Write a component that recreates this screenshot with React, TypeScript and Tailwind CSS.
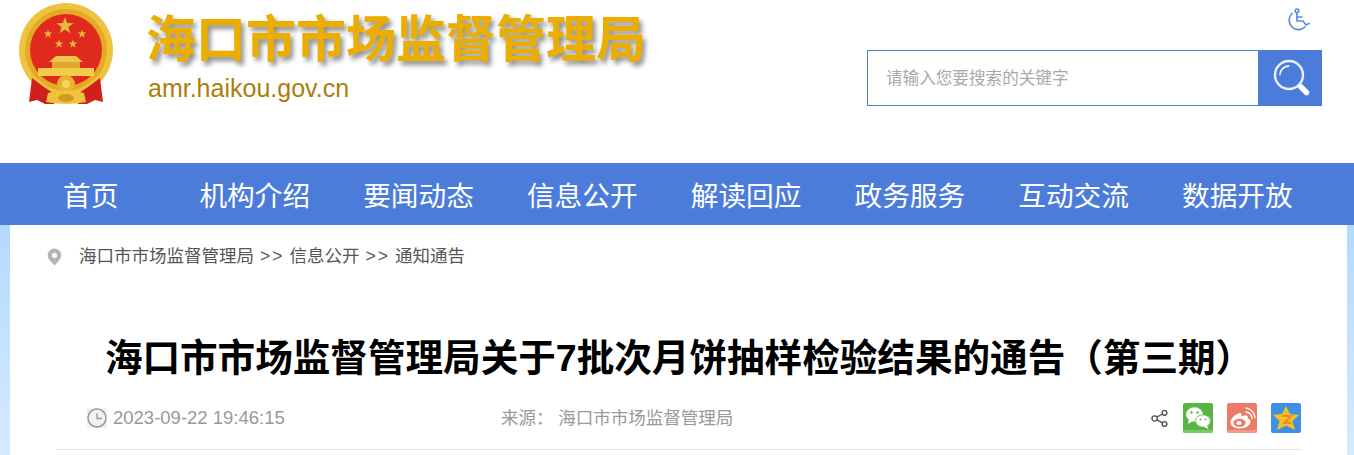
import React from 'react';

const cjk = "font-['Liberation_Sans','Noto_Sans_CJK_SC',sans-serif]";

const navItems = ['机构介绍', '要闻动态', '信息公开', '解读回应', '政务服务', '互动交流', '数据开放'];

const Star: React.FC<{ x: number; y: number; r: number }> = ({ x, y, r }) => {
  const pts: string[] = [];
  for (let i = 0; i < 10; i++) {
    const rad = i % 2 === 0 ? r : r * 0.4;
    const a = (Math.PI / 5) * i - Math.PI / 2;
    pts.push(`${x + rad * Math.cos(a)},${y + rad * Math.sin(a)}`);
  }
  return <polygon points={pts.join(' ')} fill="#e9b93a" />;
};

const Emblem: React.FC = () => (
  <svg width="96" height="102" viewBox="0 0 96 102" className="shrink-0">
    <circle cx="48" cy="47" r="47" fill="#efc23f" />
    <circle cx="48" cy="47" r="41" fill="#e3ab24" />
    <circle cx="48" cy="47" r="36" fill="#e02a1e" />
    <Star x={47} y={23} r={9} />
    <Star x={30} y={31} r={4.5} />
    <Star x={64} y={31} r={4.5} />
    <Star x={41} y={41} r={4.5} />
    <Star x={55} y={41} r={4.5} />
    <path d="M38 53 H58 L65 59 H31 Z" fill="#efc64c" />
    <rect x="34" y="59" width="28" height="6" fill="#e0a92c" />
    <rect x="20" y="65" width="56" height="8" fill="#f3cc4a" />
    <path d="M16 72 Q30 88 48 88 Q66 88 80 72 L84 76 Q68 94 48 94 Q28 94 12 76 Z" fill="#efc23f" />
    <path d="M14 75 L11 99 L19 97 L27 101 L36 101 L38 92 L26 84 Z" fill="#d0201c" />
    <path d="M82 75 L85 99 L77 97 L69 101 L60 101 L58 92 L70 84 Z" fill="#d0201c" />
    <circle cx="48" cy="81" r="9" fill="#e8b42e" />
    <circle cx="48" cy="81" r="4" fill="#f5d35c" />
    <path d="M30 90 Q48 84 66 90 L68 99 Q48 103 28 99 Z" fill="#efc23f" />
    <ellipse cx="48" cy="95" rx="8" ry="4" fill="#d59a1c" />
  </svg>
);

const WheelchairIcon: React.FC = () => (
  <svg width="24" height="24" viewBox="0 0 24 24" fill="none" stroke="#5f8ae0" strokeWidth="1.7" strokeLinecap="round" strokeLinejoin="round">
    <circle cx="11" cy="2.8" r="1.8" />
    <path d="M11 5.5 V13 H17 L20 17 L23 15.5" />
    <path d="M11 9 H16" />
    <path d="M6 5.5 A9.2 9.2 0 1 0 19 19" />
  </svg>
);

const SearchIcon: React.FC = () => (
  <svg width="38" height="38" viewBox="0 0 38 38" fill="none" className="ml-[3px]">
    <circle cx="16" cy="16" r="14" stroke="#e8f0fb" strokeWidth="2.4" />
    <path d="M7 15.5 A9 9 0 0 1 15.5 7" stroke="#e8f0fb" strokeWidth="1.8" strokeLinecap="round" />
    <path d="M28 28 L33.5 33.5" stroke="#ffffff" strokeWidth="5.5" strokeLinecap="round" />
  </svg>
);

const PinIcon: React.FC = () => (
  <svg width="15" height="18" viewBox="0 0 15 18">
    <path fillRule="evenodd" d="M7.5 0.5 A6.8 6.8 0 0 1 14.3 7.3 C14.3 11 10 15 7.5 17.5 C5 15 0.7 11 0.7 7.3 A6.8 6.8 0 0 1 7.5 0.5 Z M7.5 4.7 A2.6 2.6 0 1 0 7.5 9.9 A2.6 2.6 0 1 0 7.5 4.7 Z" fill="#b5b5b5" />
  </svg>
);

const ClockIcon: React.FC = () => (
  <svg width="20" height="20" viewBox="0 0 20 20" fill="none" className="bg-[#f1f1f1]">
    <circle cx="10" cy="10" r="9" stroke="#999999" strokeWidth="1.5" />
    <path d="M10 5 V10.5 H15" stroke="#999999" strokeWidth="1.3" />
  </svg>
);

const ShareIcon: React.FC = () => (
  <svg width="18" height="19" viewBox="0 0 18 19" fill="none" stroke="#555555" strokeWidth="1.4">
    <circle cx="13.5" cy="3.8" r="2.4" />
    <circle cx="13.5" cy="15" r="2.4" />
    <circle cx="3.6" cy="9.5" r="2.6" />
    <path d="M5.9 8.2 L11.4 5 M5.9 10.8 L11.4 13.8" />
  </svg>
);

const WechatIcon: React.FC = () => (
  <svg width="30" height="30" viewBox="0 0 30 30" className="rounded-[2px]">
    <rect width="30" height="30" fill="#56b63f" />
    <rect y="27" width="30" height="3" fill="#7cc86a" />
    <ellipse cx="11.5" cy="11.5" rx="8.5" ry="7.2" fill="#ffffff" />
    <path d="M6 16 L5 21 L10 18 Z" fill="#ffffff" />
    <ellipse cx="20" cy="18" rx="7.5" ry="6.2" fill="#ffffff" stroke="#56b63f" strokeWidth="0.8" />
    <path d="M24 22.5 L25.5 26 L21 24 Z" fill="#ffffff" />
    <circle cx="8.5" cy="9.5" r="1.2" fill="#56b63f" />
    <circle cx="14.5" cy="9.5" r="1.2" fill="#56b63f" />
    <circle cx="17.5" cy="16.5" r="1" fill="#56b63f" />
    <circle cx="22.5" cy="16.5" r="1" fill="#56b63f" />
  </svg>
);

const WeiboIcon: React.FC = () => (
  <svg width="30" height="30" viewBox="0 0 30 30" className="rounded-[2px]">
    <rect width="30" height="30" fill="#ec7a66" />
    <rect y="27" width="30" height="3" fill="#f19a8a" />
    <path d="M12.5 10 C7 12 3.5 16 3.5 19.5 C3.5 23 8 25.5 13 25.5 C19 25.5 23.5 22 23.5 18.5 C23.5 16.5 21.5 15.8 20.5 15.5 C21.2 13.5 20.5 12.2 18.5 12.2 C17 12.2 15 13 14.5 13.2 C14.8 11 14 9.5 12.5 10 Z" fill="#ffffff" />
    <ellipse cx="12.5" cy="19.8" rx="6.2" ry="4" fill="#ec7a66" />
    <ellipse cx="12" cy="20" rx="2.6" ry="2" fill="#ffffff" />
    <path d="M19 9 A7 7 0 0 1 25 15.5 M19 5 A11 11 0 0 1 28 14.5" fill="none" stroke="#ffffff" strokeWidth="1.3" strokeLinecap="round" />
  </svg>
);

const QzoneIcon: React.FC = () => (
  <svg width="30" height="30" viewBox="0 0 30 30" className="rounded-[2px]">
    <rect width="30" height="30" fill="#3f8fe4" />
    <polygon points="15,3 19,11 28,12 21.5,18 24,27 15,22.5 6,27 8.5,18 2,12 11,11" fill="#f6c01e" />
    <path d="M10.5 13 H20 L13.5 20 H20.5" fill="none" stroke="#e0912a" strokeWidth="2.2" />
  </svg>
);

const Sep: React.FC = () => <span className="ml-[6px] mr-[5px] tracking-[2px]">&gt;&gt;</span>;

const App: React.FC = () => {
  return (
    <div className={`h-[455px] overflow-hidden bg-white ${cjk}`}>
      <header className="h-[163px] flex justify-between pl-[18px] pr-[32px]">
        <div className="flex pt-[3px]">
          <Emblem />
          <div className="ml-[32px]">
            <h1 className="mt-[2px] text-[50px] leading-[70px] font-bold text-[#ebad00] [text-shadow:3px_4px_5px_rgba(0,0,0,0.45)]">
              海口市市场监督管理局
            </h1>
            <p className="ml-[2px] mt-[-2px] text-[25px] leading-[30px] text-[#ac7d0c]">amr.haikou.gov.cn</p>
          </div>
        </div>
        <div className="flex flex-col items-end pt-[8px]">
          <div className="mr-[12px] h-[24px]">
            <WheelchairIcon />
          </div>
          <div className="mt-[18px] flex h-[56px] w-[455px]">
            <div className="flex flex-1 items-center border border-[#4c7cd9] pl-[18px] pt-[2px] text-[16.6px] text-[#a9a9a9]">
              请输入您要搜索的关键字
            </div>
            <div className="flex w-[63px] items-center justify-center bg-[#4c7cd9]">
              <SearchIcon />
            </div>
          </div>
        </div>
      </header>

      <nav className="flex h-[62px] items-center bg-[#4c7cd9] pl-[63px] pt-[5px] text-[27.7px] text-white">
        <a className="mr-[81px]">首页</a>
        <div className="flex gap-[53px]">
          {navItems.map((item) => (
            <a key={item}>{item}</a>
          ))}
        </div>
      </nav>

      <div className="h-[230px] bg-gradient-to-b from-[#b3d9ff] to-[#d6eaff] pl-[10px] pr-[7px]">
        <main className="h-full bg-white pl-[37px] pr-[46px]">
          <div className="flex h-[64px] items-center pb-[1px] text-[17.5px] text-[#555555]">
            <PinIcon />
            <span className="ml-[17px]">
              海口市市场监督管理局<Sep />信息公开<Sep />通知通告
            </span>
          </div>
          <h2 className="mt-[37px] pl-[10px] text-center text-[37.6px] leading-[64px] font-bold text-black">
            海口市市场监督管理局关于7批次月饼抽样检验结果的通告（第三期）
          </h2>
          <div className="ml-[9px] flex h-[60px] items-center border-b border-[#e2e2e2] pb-[3px] pl-[31px] text-[#999999]">
            <ClockIcon />
            <span className="ml-[6px] w-[388px] text-[18.5px]">2023-09-22 19:46:15</span>
            <span className="text-[17.5px]">来源：&nbsp;海口市市场监督管理局</span>
            <div className="ml-auto flex items-center gap-[14px]">
              <ShareIcon />
              <WechatIcon />
              <WeiboIcon />
              <QzoneIcon />
            </div>
          </div>
        </main>
      </div>
    </div>
  );
};

export default App;
